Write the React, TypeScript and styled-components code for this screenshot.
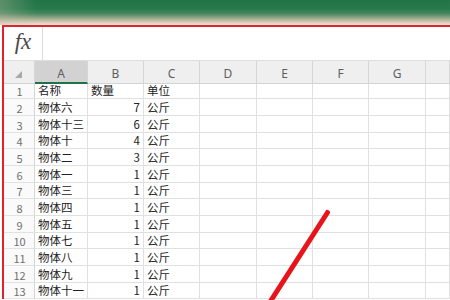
import React from "react";
import styled, { createGlobalStyle } from "styled-components";

const GlobalStyle = createGlobalStyle`
  html, body { margin: 0; padding: 0; background: #ffffff; }
  body { font-family: "Noto Sans CJK SC", "Noto Sans", sans-serif; overflow: hidden; }
`;

const Screen = styled.div`
  position: relative;
  width: 450px;
  height: 300px;
  overflow: hidden;
  background: #ffffff;
`;

const TitleBand = styled.div`
  height: 25px;
  background:
    linear-gradient(to right, rgba(200, 190, 170, 0.35) 0%, rgba(200, 190, 170, 0) 8%),
    linear-gradient(
      to bottom,
      #237348 0%,
      #267a4b 35%,
      #4a8760 55%,
      #92a88a 72%,
      #d4cab3 88%,
      #f3e3dc 100%
    );
`;

const Frame = styled.div`
  margin-left: 2px;
  border-top: 2px solid #d9252b;
  border-left: 2px solid #e3232b;
  display: flex;
  flex-direction: column;
`;

const FormulaBar = styled.div`
  height: 33px;
  display: flex;
  border-bottom: 1px solid #dedede;
  background: #ffffff;
`;

const FxBox = styled.div`
  width: 39px;
  border-right: 1px solid #dcdcdc;
  display: flex;
  align-items: center;
  justify-content: center;
  font-family: "Liberation Serif", "DejaVu Serif", serif;
  font-style: italic;
  font-size: 23px;
  color: #4a4a4a;
  padding-bottom: 3px;
  box-sizing: border-box;
`;

const FormulaInput = styled.div`
  flex: 1;
`;

const Sheet = styled.div`
  display: grid;
  grid-template-columns: 31px 53px 56px 56px 57px 56px 56px 57px 1fr;
  grid-template-rows: 23px 15.3px repeat(12, 16.67px);
`;

const HeaderBase = styled.div`
  box-sizing: border-box;
  background: #efefef;
  border-right: 1px solid #d6d6d6;
  border-bottom: 1px solid #d4d4d4;
  display: flex;
  align-items: center;
  justify-content: center;
  font-family: "Noto Sans", "Liberation Sans", sans-serif;
  font-size: 12px;
  color: #5e5e5e;
  padding-top: 3px;
`;

const Corner = styled(HeaderBase)`
  position: relative;
`;

const CornerTriangle = styled.span`
  position: absolute;
  left: 11px;
  bottom: 5px;
  width: 0;
  height: 0;
  border-left: 7px solid transparent;
  border-bottom: 7px solid #a8a8a8;
`;

const ColHeader = styled(HeaderBase)<{ $active?: boolean }>`
  background: ${(p) => (p.$active ? "#d2d2d2" : "#efefef")};
  border-bottom: ${(p) => (p.$active ? "2px solid #217346" : "1px solid #d4d4d4")};
`;

const RowHeader = styled.div`
  box-sizing: border-box;
  background: #fafafa;
  border-right: 1px solid #d6d6d6;
  border-bottom: 1px solid #e2e2e2;
  display: flex;
  align-items: flex-end;
  justify-content: center;
  font-family: "Noto Sans CJK SC", "Noto Sans", sans-serif;
  font-size: 11px;
  line-height: 14px;
  color: #707070;
  padding-left: 1px;
`;

const Cell = styled.div<{ $align?: "left" | "right" }>`
  box-sizing: border-box;
  border-right: 1px solid #e0e0e0;
  border-bottom: 1px solid #e0e0e0;
  display: flex;
  align-items: flex-end;
  justify-content: ${(p) => (p.$align === "right" ? "flex-end" : "flex-start")};
  padding: 0 3px 0 3px;
  font-family: "Noto Sans CJK SC", sans-serif;
  font-size: 11.5px;
  line-height: 15px;
  color: #222222;
  white-space: nowrap;
  overflow: visible;
`;

const Annotation = styled.svg`
  position: absolute;
  left: 0;
  top: 0;
  pointer-events: none;
`;

const columns = ["A", "B", "C", "D", "E", "F", "G", ""];

const rows: [string, string, string][] = [
  ["名称", "数量", "单位"],
  ["物体六", "7", "公斤"],
  ["物体十三", "6", "公斤"],
  ["物体十", "4", "公斤"],
  ["物体二", "3", "公斤"],
  ["物体一", "1", "公斤"],
  ["物体三", "1", "公斤"],
  ["物体四", "1", "公斤"],
  ["物体五", "1", "公斤"],
  ["物体七", "1", "公斤"],
  ["物体八", "1", "公斤"],
  ["物体九", "1", "公斤"],
  ["物体十一", "1", "公斤"],
];

export default function App() {
  return (
    <>
      <GlobalStyle />
      <Screen>
        <TitleBand />
        <Frame>
          <FormulaBar>
            <FxBox>fx</FxBox>
            <FormulaInput />
          </FormulaBar>
          <Sheet>
            <Corner>
              <CornerTriangle />
            </Corner>
            {columns.map((c, i) => (
              <ColHeader key={i} $active={c === "A"}>
                {c}
              </ColHeader>
            ))}
            {rows.map((r, ri) => (
              <React.Fragment key={ri}>
                <RowHeader>{ri + 1}</RowHeader>
                <Cell>{r[0]}</Cell>
                <Cell $align={ri === 0 ? "left" : "right"}>{r[1]}</Cell>
                <Cell>{r[2]}</Cell>
                <Cell />
                <Cell />
                <Cell />
                <Cell />
                <Cell />
              </React.Fragment>
            ))}
          </Sheet>
        </Frame>
        <Annotation width={450} height={300} viewBox="0 0 450 300">
          <line
            x1={327.5}
            y1={212.5}
            x2={270}
            y2={302}
            stroke="#e8141c"
            strokeWidth={5}
            strokeLinecap="round"
          />
        </Annotation>
      </Screen>
    </>
  );
}
